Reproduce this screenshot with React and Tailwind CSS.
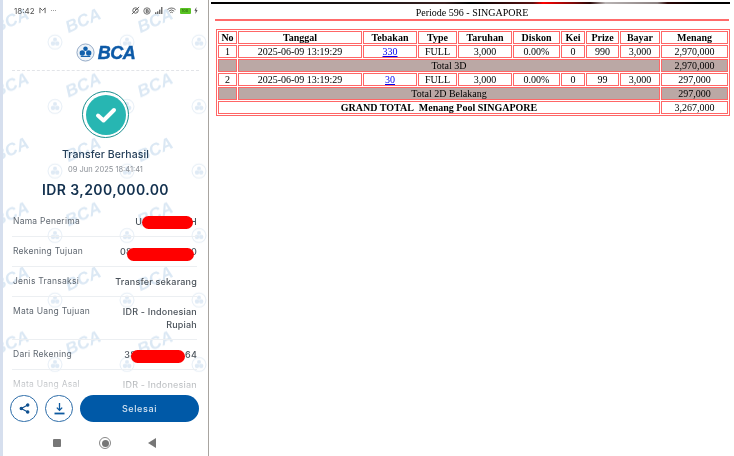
import { useId } from "react";

const rowsTop = "border-b border-[#eceff2]";

function Watermark() {
  const id = useId();
  return (
    <svg className="absolute inset-0 h-full w-full" aria-hidden="true">
      <defs>
        <pattern id={id} width="72" height="64.5" patternUnits="userSpaceOnUse" patternTransform="translate(34 5)">
          <g transform="rotate(-24 46 15)">
            <text x="46" y="21" textAnchor="middle" fontFamily="Liberation Sans" fontWeight="700" fontStyle="italic" fontSize="17" fill="#dbe8f4">
              BCA
            </text>
          </g>
          <circle cx="18" cy="37" r="7" fill="none" stroke="#e6eef6" strokeWidth="1" />
          <circle cx="16" cy="38.5" r="2.2" fill="#dfeaf5" />
          <circle cx="20.2" cy="38.5" r="2.2" fill="#dfeaf5" />
          <circle cx="18" cy="34.5" r="2" fill="#dfeaf5" />
        </pattern>
      </defs>
      <rect width="100%" height="100%" fill={`url(#${id})`} />
    </svg>
  );
}

function StatusBar() {
  return (
    <div className="flex h-[21px] items-center justify-between pl-[11px] pr-[10px] text-[8px] text-[#555]">
      <div className="flex items-center gap-[4px]">
        <span>18:42</span>
        <svg width="7" height="7" viewBox="0 0 8 8" fill="none" stroke="#555" strokeWidth="1">
          <path d="M1 7V1l3 3 3-3v6" />
        </svg>
        <span className="ml-[1px] text-[7px] leading-none">···</span>
      </div>
      <div className="flex items-center gap-[3.5px]">
        <svg width="9" height="9" viewBox="0 0 10 10" fill="none" stroke="#555" strokeWidth="1">
          <circle cx="5" cy="5" r="3" />
          <path d="M1 9 9 1M5 3.5V5l1 1" />
        </svg>
        <svg width="8" height="8" viewBox="0 0 10 10" fill="none" stroke="#555" strokeWidth="1">
          <circle cx="5" cy="5" r="4" />
          <path d="M4 2.8v4.4M4 3h1.6a1 1 0 0 1 0 2H4h2a1 1 0 0 1 0 2H4" />
        </svg>
        <svg width="9" height="7" viewBox="0 0 10 8" fill="#555">
          <rect x="0" y="6" width="1.4" height="2" />
          <rect x="2.3" y="5" width="1.4" height="3" />
          <rect x="4.6" y="3" width="1.4" height="5" />
          <rect x="6.9" y="0" width="1.4" height="8" />
        </svg>
        <svg width="9" height="8" viewBox="0 0 10 8" fill="none" stroke="#555" strokeWidth="1">
          <path d="M.5 2.5a6.5 6.5 0 0 1 9 0M2 4.2a4.4 4.4 0 0 1 6 0M3.6 5.9a2 2 0 0 1 2.8 0" />
        </svg>
        <div className="flex h-[6px] w-[11px] items-center justify-center rounded-[1px] bg-[#58c322] text-[4px] leading-none text-[#2b5a10]">
          100
        </div>
        <svg width="4" height="7" viewBox="0 0 4 7" fill="#555">
          <path d="M2.4 0 .4 3.8h1.3L1.4 7l2.2-4H2.2z" />
        </svg>
      </div>
    </div>
  );
}

function BcaLogo() {
  return (
    <div className="mx-[9px] flex h-[50px] items-center justify-center gap-[3px] border-b border-dashed border-[#e2e4e8] pt-[14px]">
      <svg width="19" height="19" viewBox="0 0 20 20">
        <circle cx="10" cy="10" r="9" fill="#eef3f8" stroke="#8fa6c4" strokeWidth="1" />
        <circle cx="10" cy="6" r="2.4" fill="#1160ac" />
        <circle cx="6.6" cy="10.5" r="2.8" fill="#1160ac" />
        <circle cx="13.4" cy="10.5" r="2.8" fill="#1160ac" />
        <rect x="5" y="13.5" width="10" height="1.2" fill="#1160ac" />
      </svg>
      <span className="font-['Liberation_Sans',sans-serif] text-[18px] font-bold italic leading-none tracking-[-0.5px] text-[#0d5aa7] [-webkit-text-stroke:0.4px_#0d5aa7]">
        BCA
      </span>
    </div>
  );
}

function Row({ label, className = "", children }) {
  return (
    <div className={`flex justify-between pt-[7px] ${rowsTop} ${className}`}>
      <span className="pl-[1px] text-[8.5px] leading-[14px] tracking-[0.25px] text-[#5f6770]">{label}</span>
      {children}
    </div>
  );
}

function Value({ children }) {
  return <div className="mt-[1px] flex text-right text-[9px] font-medium leading-[13px] tracking-[0.2px] text-[#4a525a]">{children}</div>;
}

function Pill({ className }) {
  return <span className={`relative z-10 block h-[13px] rounded-full bg-[#ff0000] ${className}`} />;
}

function Phone() {
  return (
    <div className="relative h-[456px] w-[205px] shrink-0 overflow-hidden bg-white font-['Inter',sans-serif] blur-[0.45px]">
      <Watermark />
      <div className="relative flex h-full flex-col">
        <StatusBar />
        <BcaLogo />

        <div className="flex flex-col items-center pt-[20px]">
          <div className="flex h-[47px] w-[47px] items-center justify-center rounded-full border-[1.5px] border-[#1c8f8f] bg-white">
            <div className="flex h-[40px] w-[40px] items-center justify-center rounded-full bg-[#27b6b2]">
              <svg width="22" height="18" viewBox="0 0 22 18" fill="none" stroke="#fff" strokeWidth="4" strokeLinecap="round" strokeLinejoin="round">
                <path d="M3 9.5 8.5 14.5 19 4" />
              </svg>
            </div>
          </div>
          <div className="mt-[10px] text-[10.5px] font-medium leading-[14px] tracking-[0.1px] text-[#26405a]">Transfer Berhasil</div>
          <div className="mt-[2px] text-[7.5px] leading-[12px] text-[#8a8f96]">09 Jun 2025 18:41:41</div>
          <div className="mt-[4px] text-[14px] font-semibold leading-[20px] tracking-[0.4px] text-[#12304e]">IDR 3,200,000.00</div>
        </div>

        <div className="ml-[9px] mr-[11px] mt-[7px] flex flex-col">
          <Row label="Nama Penerima" className="h-[30px]">
            <Value>
              <span>U</span>
              <Pill className="-mr-[3px] mt-[1px] w-[51px]" />
              <span>H</span>
            </Value>
          </Row>
          <Row label="Rekening Tujuan" className="h-[30px]">
            <Value>
              <span>08</span>
              <Pill className="-ml-[5px] -mr-[3px] mt-[3px] w-[67px]" />
              <span>0</span>
            </Value>
          </Row>
          <Row label="Jenis Transaksi" className="h-[30px]">
            <Value>Transfer sekarang</Value>
          </Row>
          <Row label="Mata Uang Tujuan" className="h-[43px]">
            <Value>
              <span className="w-[90px]">IDR - Indonesian Rupiah</span>
            </Value>
          </Row>
          <Row label="Dari Rekening" className="h-[30px]">
            <Value>
              <span>38</span>
              <Pill className="-ml-[5px] mt-[2px] w-[54px]" />
              <span>64</span>
            </Value>
          </Row>
          <Row label="Mata Uang Asal" className="h-[30px] border-b-0">
            <Value>
              <span className="w-[90px]">IDR - Indonesian Rupiah</span>
            </Value>
          </Row>
        </div>

        {/* fade over the list, bottom buttons sit on top */}
        <div className="absolute inset-x-0 bottom-0 h-[64px] bg-white" />
        <div className="absolute inset-x-0 bottom-[64px] h-[20px] bg-gradient-to-b from-white/40 to-white/80" />

        <div className="absolute inset-x-0 bottom-0 flex flex-col">
          <div className="flex h-[27px] items-center pl-[7px] pr-[9px]">
            <button className="flex h-[27px] w-[28px] items-center justify-center rounded-full border border-[#2c6ca8] bg-white">
              <svg width="11" height="11" viewBox="0 0 12 12" fill="#0d4f8f" stroke="#0d4f8f" strokeWidth="1.2">
                <circle cx="9.5" cy="2.3" r="1.3" />
                <circle cx="2.5" cy="6" r="1.3" />
                <circle cx="9.5" cy="9.7" r="1.3" />
                <path d="M9.5 2.3 2.5 6l7 3.7" fill="none" />
              </svg>
            </button>
            <button className="ml-[7px] flex h-[27px] w-[28px] items-center justify-center rounded-full border border-[#2c6ca8] bg-white">
              <svg width="13" height="13" viewBox="0 0 13 13" fill="none" stroke="#0d5aa0" strokeWidth="1.3">
                <path d="M6.5 1v7M3.8 5.6l2.7 2.7 2.7-2.7" />
                <path d="M1.5 11.5h10" strokeWidth="1.8" />
              </svg>
            </button>
            <button className="ml-[7px] flex h-[27px] flex-1 items-center justify-center rounded-full bg-[#0059a7] text-[9px] font-medium tracking-[0.6px] text-[#d4e4f2]">
              Selesai
            </button>
          </div>
          <div className="flex h-[34px] items-center pl-[50px] pt-[8px]">
            <div className="h-[8px] w-[8px] rounded-[1px] bg-[#777]" />
            <div className="ml-[38px] flex h-[12px] w-[12px] items-center justify-center rounded-full border border-[#888]">
              <div className="h-[7px] w-[7px] rounded-full bg-[#777]" />
            </div>
            <svg className="ml-[37px]" width="8" height="10" viewBox="0 0 8 10" fill="#777">
              <path d="M8 0v10L0 5z" />
            </svg>
          </div>
        </div>
      </div>
    </div>
  );
}

const th = "border border-[#ff6666] p-0 font-bold";
const td = "border border-[#ff6666] p-0";
const total = "border border-[#ff6666] bg-[#bba8a5] p-0";

function Results() {
  const widths = [19, 124, 54, 39, 54, 47, 24, 33, 40, 67];
  const head = ["No", "Tanggal", "Tebakan", "Type", "Taruhan", "Diskon", "Kei", "Prize", "Bayar", "Menang"];

  const betRow = (no, guess, prize, win) => (
    <tr className="h-[13px]">
      <td className={td}>{no}</td>
      <td className={td}>2025-06-09 13:19:29</td>
      <td className={td}>
        <a href="#" className="text-[#0000ee] underline">{guess}</a>
      </td>
      <td className={td}>FULL</td>
      <td className={td}>3,000</td>
      <td className={td}>0.00%</td>
      <td className={td}>0</td>
      <td className={td}>{prize}</td>
      <td className={td}>3,000</td>
      <td className={td}>{win}</td>
    </tr>
  );

  const totalRow = (label, amount) => (
    <tr className="h-[13px]">
      <td className={total}></td>
      <td className={total} colSpan={8}>{label}</td>
      <td className={total}>{amount}</td>
    </tr>
  );

  return (
    <div className="flex flex-1 flex-col pl-[6px] font-['Liberation_Serif',serif] text-[10px] text-black blur-[0.2px]">
      <div className="-ml-[4px] mr-[4px] mt-[2px] h-[2px] bg-[linear-gradient(90deg,#000_0%,#1a1414_30%,#3a2020_45%,#000_50%,#5a1010_62%,#ff0000_64%,#7a0a0a_70%,#2a0505_73%,#b9b4b4_76%,#8a8080_86%,#2a0505_88%,#000_94%)]" />
      <div className="mt-[3px] h-[12px] pr-[5px] text-center text-[10px] leading-[12px]">Periode 596 - SINGAPORE</div>
      <div className="mr-[5px] h-[2px] bg-[#ff6b6b]" />
      <table className="ml-[1px] mt-[8px] w-[514px] table-fixed border-separate border-spacing-[1px] border border-[#ff6666] text-center leading-[11px]">
        <colgroup>
          {widths.map((w, i) => (
            <col key={i} style={{ width: w }} />
          ))}
        </colgroup>
        <tbody>
          <tr className="h-[13px]">
            {head.map((h) => (
              <td key={h} className={th}>{h}</td>
            ))}
          </tr>
          {betRow(1, "330", "990", "2,970,000")}
          {totalRow("Total 3D", "2,970,000")}
          {betRow(2, "30", "99", "297,000")}
          {totalRow("Total 2D Belakang", "297,000")}
          <tr className="h-[13px]">
            <td className={`${td} font-bold`} colSpan={9}>GRAND TOTAL&nbsp; Menang Pool SINGAPORE</td>
            <td className={td}>3,267,000</td>
          </tr>
        </tbody>
      </table>
    </div>
  );
}

export default function App() {
  return (
    <div className="flex h-[456px] w-[734px] overflow-hidden bg-white">
      <div className="w-[3px] shrink-0 bg-[#d6dfee]" />
      <Phone />
      <div className="w-[1px] shrink-0 bg-[#a8a4a0]" />
      <Results />
    </div>
  );
}
